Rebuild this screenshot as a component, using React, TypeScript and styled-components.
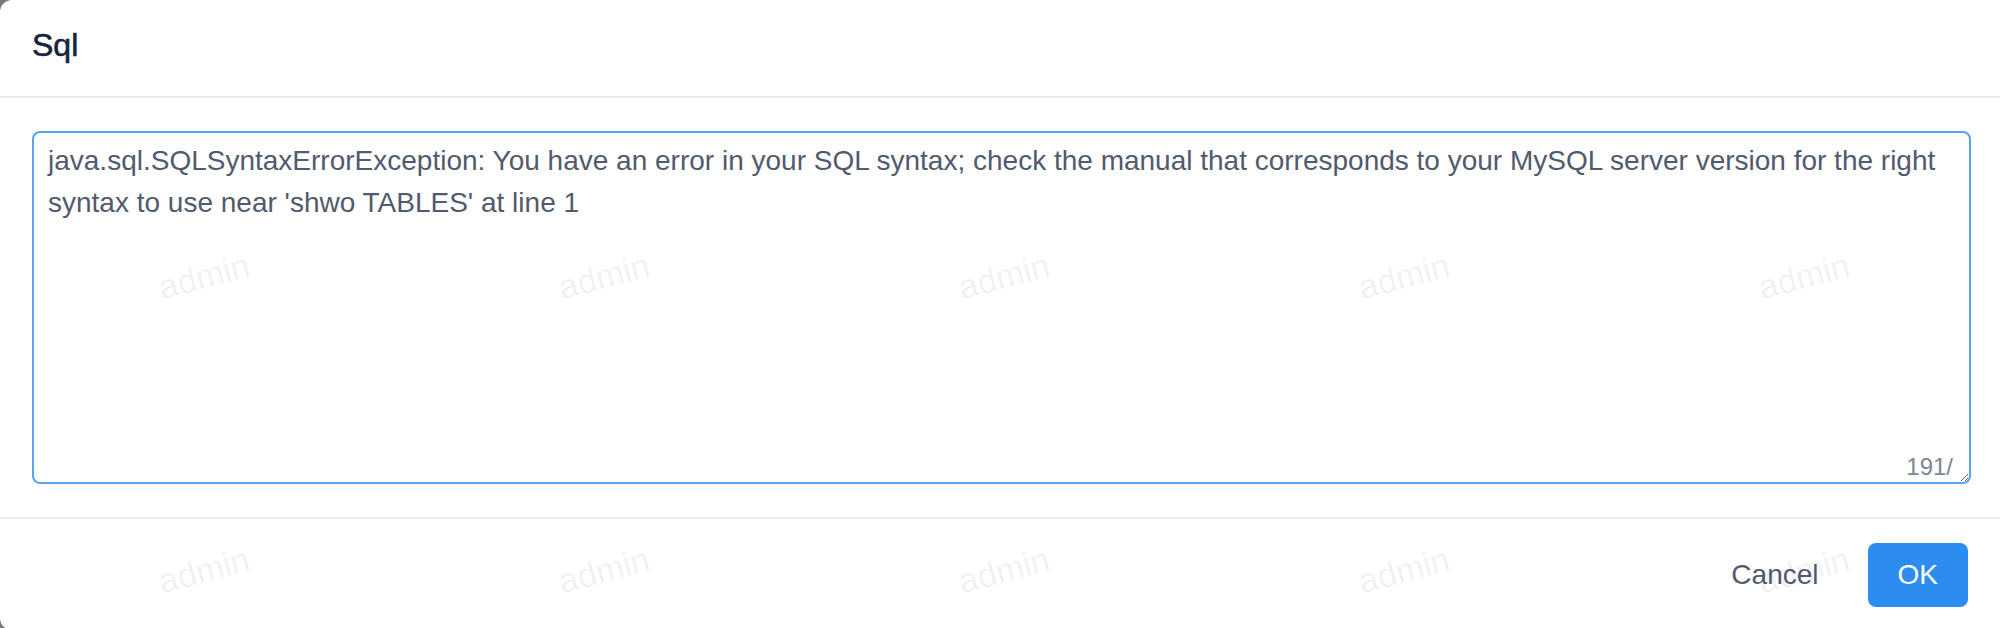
import React from "react";
import styled, { createGlobalStyle } from "styled-components";

const Global = createGlobalStyle`
  html, body {
    margin: 0;
    padding: 0;
    background: #7a7a7a;
    overflow: hidden;
  }
  * { box-sizing: border-box; }
`;

const Modal = styled.div`
  position: relative;
  width: 2000px;
  background: #fff;
  border-radius: 12px 0 0 12px;
  overflow: hidden;
  font-family: "Liberation Sans", Helvetica, Arial, sans-serif;
  display: flex;
  flex-direction: column;
`;

const Header = styled.div`
  padding: 28px 32px 34px;
  border-bottom: 2px solid #e8eaec;
`;

const Title = styled.div`
  font-size: 32px;
  line-height: 34px;
  color: #17233d;
  -webkit-text-stroke: 0.6px #17233d;
`;

const Body = styled.div`
  padding: 33px 29px 33px 32px;
`;

const AreaWrap = styled.div`
  position: relative;
  height: 353px;
`;

const Area = styled.textarea`
  display: block;
  width: 100%;
  height: 100%;
  margin: 0;
  border: 2px solid #57a3f3;
  border-radius: 8px;
  padding: 7px 14px 8px 14px;
  font-family: "Liberation Sans", Helvetica, Arial, sans-serif;
  font-size: 28px;
  line-height: 42px;
  color: #515a6e;
  background: transparent;
  outline: none;
  resize: vertical;
  overflow: hidden;
`;

const Counter = styled.span`
  position: absolute;
  right: 18px;
  bottom: 5px;
  font-size: 24px;
  line-height: 24px;
  color: #808695;
`;

const Footer = styled.div`
  display: flex;
  justify-content: flex-end;
  align-items: center;
  gap: 19px;
  padding: 24px 32px 23px;
  border-top: 2px solid #e8eaec;
`;

const Button = styled.button<{ $primary?: boolean }>`
  height: 64px;
  padding: 0 30px;
  border: none;
  border-radius: 8px;
  font-family: "Liberation Sans", Helvetica, Arial, sans-serif;
  font-size: 28px;
  line-height: 64px;
  cursor: pointer;
  background: ${(p) => (p.$primary ? "#2d8cf0" : "transparent")};
  color: ${(p) => (p.$primary ? "#ffffff" : "#515a6e")};
`;

const Watermarks = styled.div`
  position: absolute;
  inset: 0;
  pointer-events: none;
  padding: 129px 0 0 4px;
  display: grid;
  grid-template-columns: repeat(5, 400px);
  grid-auto-rows: 294px;
`;

const Mark = styled.div`
  display: flex;
  align-items: center;
  justify-content: center;
  font-family: "Liberation Sans", Helvetica, Arial, sans-serif;
  font-size: 34px;
  color: rgba(0, 0, 0, 0.06);
  transform: rotate(-15deg);
`;

const message =
  "java.sql.SQLSyntaxErrorException: You have an error in your SQL syntax; check the manual that corresponds to your MySQL server version for the right syntax to use near 'shwo TABLES' at line 1";

export default function App() {
  return (
    <>
      <Global />
      <Modal>
        <Header>
          <Title>Sql</Title>
        </Header>
        <Body>
          <AreaWrap>
            <Area readOnly defaultValue={message} />
            <Counter>191/</Counter>
          </AreaWrap>
        </Body>
        <Footer>
          <Button>Cancel</Button>
          <Button $primary>OK</Button>
        </Footer>
        <Watermarks>
          {Array.from({ length: 10 }).map((_, i) => (
            <Mark key={i}>admin</Mark>
          ))}
        </Watermarks>
      </Modal>
    </>
  );
}
